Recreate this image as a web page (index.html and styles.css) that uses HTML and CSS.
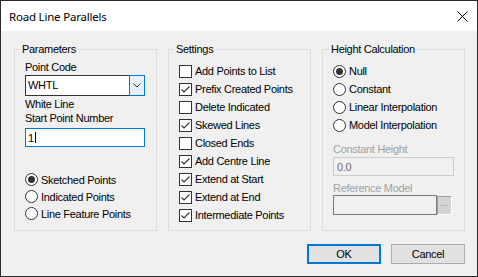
FILE: index.html
```html
<!DOCTYPE html>
<html lang="en">
<head>
    <meta charset="UTF-8">
    <title>Road Line Parallels</title>
    <link rel="stylesheet" href="styles.css">
</head>
<body>
    <div class="window">
        <div class="titlebar">
            <span class="title">Road Line Parallels</span>
            <svg class="close" width="11" height="11" viewBox="0 0 11 11">
                <path d="M0.5 0.5L10.5 10.5M10.5 0.5L0.5 10.5" stroke="#000" stroke-width="1" fill="none"/>
            </svg>
        </div>

        <div class="content">
            <div class="groups">
                <fieldset class="group params">
                    <legend>Parameters</legend>
                    <div class="label">Point Code</div>
                    <div class="combo">
                        <span class="combo-text">WHTL</span>
                        <span class="combo-btn">
                            <svg width="8" height="5" viewBox="0 0 8 5">
                                <path d="M0.5 0.5L4 4L7.5 0.5" stroke="#333" stroke-width="1" fill="none"/>
                            </svg>
                        </span>
                    </div>
                    <div class="label after-combo">White Line</div>
                    <div class="label start-label">Start Point Number</div>
                    <div class="textbox focused"><span>1</span><span class="caret"></span></div>
                    <div class="options radios-left">
                        <div class="option"><span class="box radio on"></span>Sketched Points</div>
                        <div class="option"><span class="box radio"></span>Indicated Points</div>
                        <div class="option"><span class="box radio"></span>Line Feature Points</div>
                    </div>
                </fieldset>

                <fieldset class="group settings">
                    <legend>Settings</legend>
                    <div class="options">
                        <div class="option"><span class="box"></span>Add Points to List</div>
                        <div class="option"><span class="box"><svg class="tick" viewBox="0 0 11 11"><path d="M1.5 5.5L4 8L9.5 2.5"/></svg></span>Prefix Created Points</div>
                        <div class="option"><span class="box"></span>Delete Indicated</div>
                        <div class="option"><span class="box"><svg class="tick" viewBox="0 0 11 11"><path d="M1.5 5.5L4 8L9.5 2.5"/></svg></span>Skewed Lines</div>
                        <div class="option"><span class="box"></span>Closed Ends</div>
                        <div class="option"><span class="box"><svg class="tick" viewBox="0 0 11 11"><path d="M1.5 5.5L4 8L9.5 2.5"/></svg></span>Add Centre Line</div>
                        <div class="option"><span class="box"><svg class="tick" viewBox="0 0 11 11"><path d="M1.5 5.5L4 8L9.5 2.5"/></svg></span>Extend at Start</div>
                        <div class="option"><span class="box"><svg class="tick" viewBox="0 0 11 11"><path d="M1.5 5.5L4 8L9.5 2.5"/></svg></span>Extend at End</div>
                        <div class="option"><span class="box"><svg class="tick" viewBox="0 0 11 11"><path d="M1.5 5.5L4 8L9.5 2.5"/></svg></span>Intermediate Points</div>
                    </div>
                </fieldset>

                <fieldset class="group height">
                    <legend>Height Calculation</legend>
                    <div class="options">
                        <div class="option"><span class="box radio on"></span>Null</div>
                        <div class="option"><span class="box radio"></span>Constant</div>
                        <div class="option"><span class="box radio"></span>Linear Interpolation</div>
                        <div class="option"><span class="box radio"></span>Model Interpolation</div>
                    </div>
                    <div class="label disabled const-label">Constant Height</div>
                    <div class="textbox disabled">0.0</div>
                    <div class="label disabled ref-label">Reference Model</div>
                    <div class="picker">
                        <span class="picker-field"></span>
                        <span class="picker-btn">...</span>
                    </div>
                </fieldset>
            </div>

            <div class="buttons">
                <div class="btn default">OK</div>
                <div class="btn">Cancel</div>
            </div>
        </div>
    </div>
</body>
</html>
```

FILE: styles.css
```css
* {
    box-sizing: border-box;
}

body {
    margin: 0;
    font-family: 'Liberation Sans', Arial, sans-serif;
    font-size: 11px;
    letter-spacing: -0.3px;
    color: #000;
}

.window {
    width: 478px;
    height: 277px;
    border: 1px solid #2b2b2b;
    background-color: #f0f0f0;
    display: flex;
    flex-direction: column;
}

.titlebar {
    height: 30px;
    flex: none;
    background-color: #fff;
    display: flex;
    align-items: center;
    justify-content: space-between;
    padding: 0 9px 0 8px;
}

.title {
    font-family: 'Noto Sans', sans-serif;
    font-size: 11.5px;
    letter-spacing: -0.2px;
}

.content {
    flex: 1;
    padding: 12px 12px 0 13px;
    display: flex;
    flex-direction: column;
}

.groups {
    display: flex;
    justify-content: space-between;
}

.group {
    width: 143px;
    height: 188px;
    margin: 0;
    min-width: 0;
    padding: 6px 10px 0 10px;
    border: 1px solid #dcdcdc;
}

.group legend {
    line-height: 13px;
    padding: 0 2px;
    margin-left: -5px;
}

.params {
    padding-top: 5px;
}

.height legend {
    margin-left: -4px;
}

.label {
    line-height: 13px;
}

.label.disabled {
    color: #a0a0a0;
}

/* combo box */
.combo {
    display: flex;
    height: 21px;
    width: 120px;
    margin-top: 1px;
}

.combo-text {
    flex: 1;
    border: 1px solid #333;
    border-right: none;
    background-color: #fff;
    padding-left: 2px;
    line-height: 19px;
}

.combo-btn {
    width: 16px;
    border: 1px solid #0078d7;
    background-color: #e5f1fb;
    display: flex;
    align-items: center;
    justify-content: center;
}

.after-combo {
    margin-top: 2px;
}

.start-label {
    margin-top: 1px;
}

/* text boxes */
.textbox {
    height: 19px;
    width: 120px;
    border: 1px solid #7a7a7a;
    background-color: #fff;
    padding-left: 2px;
    display: flex;
    align-items: center;
}

.textbox.focused {
    border-color: #0078d7;
    margin-top: 3px;
}

.caret {
    width: 1px;
    height: 11px;
    margin-left: 1px;
    background-color: #000;
}

.textbox.disabled {
    width: 121px;
    border-color: #ccc;
    background-color: #f0f0f0;
    color: #6d6d6d;
    padding-left: 3px;
    margin-top: 1px;
}

/* checkboxes and radios */
.option {
    height: 18px;
    display: flex;
    align-items: center;
    gap: 3px;
    white-space: nowrap;
}

.radios-left {
    margin-top: 24px;
}

.radios-left .option {
    height: 17px;
}

.box {
    flex: none;
    width: 13px;
    height: 13px;
    border: 1px solid #333;
    background-color: #fff;
    display: flex;
    align-items: center;
    justify-content: center;
}

.tick {
    width: 11px;
    height: 11px;
    fill: none;
    stroke: #333;
    stroke-width: 1.1;
}

.radio {
    border-radius: 50%;
}

.radio.on::after {
    content: "";
    width: 7px;
    height: 7px;
    border-radius: 50%;
    background-color: #333;
}

.const-label {
    margin-top: 9px;
}

.ref-label {
    margin-top: 6px;
}

/* reference model picker */
.picker {
    display: flex;
    height: 20px;
}

.picker-field {
    width: 104px;
    border: 1px solid #7a7a7a;
    background-color: #f0f0f0;
}

.picker-btn {
    width: 15px;
    height: 19px;
    margin-top: 1px;
    background-color: #d4d4d4;
    border-top: 1px solid #a0a0a0;
    border-left: 1px solid #a0a0a0;
    border-right: 1px solid #fff;
    border-bottom: 1px solid #fff;
    color: #8a8a8a;
    font-size: 9px;
    letter-spacing: 0;
    line-height: 13px;
    text-align: center;
}

/* dialog buttons */
.buttons {
    display: flex;
    justify-content: flex-end;
    gap: 10px;
    margin-top: 13px;
}

.btn {
    width: 74px;
    height: 20px;
    border: 1px solid #adadad;
    background-color: #e1e1e1;
    display: flex;
    align-items: center;
    justify-content: center;
}

.btn.default {
    border: 2px solid #0078d7;
}
```
